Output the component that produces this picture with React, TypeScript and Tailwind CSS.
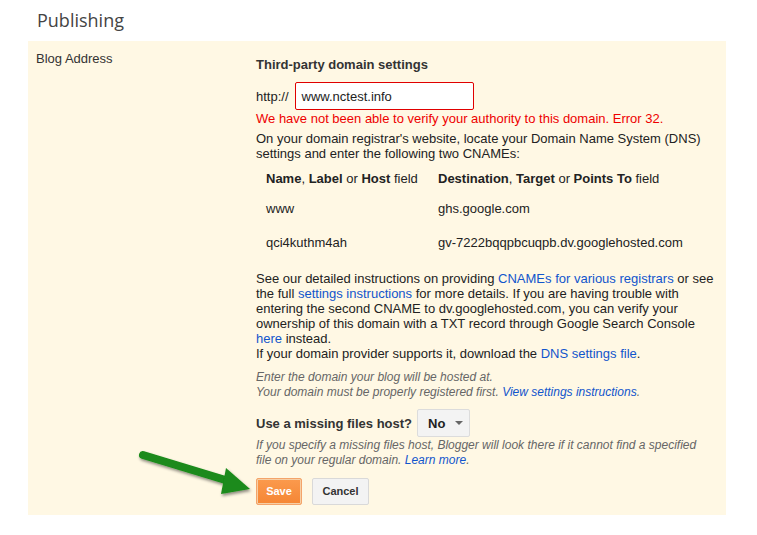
import type { ReactNode } from 'react'

function A({ children }: { children: ReactNode }) {
  return <a className="text-[#1155cc] no-underline">{children}</a>
}

function GreenArrow() {
  return (
    <svg
      className="pointer-events-none absolute left-[134px] top-[444px]"
      width="124"
      height="56"
      viewBox="0 0 124 56"
    >
      <defs>
        <filter id="sh" x="-20%" y="-40%" width="140%" height="180%">
          <feDropShadow dx="1" dy="2" stdDeviation="1.5" floodColor="#000" floodOpacity="0.45" />
        </filter>
      </defs>
      <g filter="url(#sh)">
        <line x1="9" y1="11" x2="98" y2="38" stroke="#1a8a1a" strokeWidth="8" strokeLinecap="round" />
        <polygon points="92,24 116,45 87,50" fill="#1a8a1a" />
      </g>
    </svg>
  )
}

export default function App() {
  return (
    <div className="relative h-[535px] w-[757px] bg-white font-['Liberation_Sans',Arial,sans-serif] text-[13px] leading-[15px] text-[#222]">
      <h1 className="h-[41px] pl-[37px] pt-[7px] font-['Open_Sans',sans-serif] text-[18px] leading-[26px] text-[#444]">
        Publishing
      </h1>

      <div className="ml-[28px] flex h-[474px] w-[698px] bg-[#fff8e4]">
        <div className="w-[228px] pl-[8px] pt-[10px] text-[#333]">Blog Address</div>

        <div className="w-[462px] pt-[16px]">
          <div className="font-bold text-[#333]">Third-party domain settings</div>

          <div className="mt-[10px] flex items-center gap-[6px]">
            <span>http://</span>
            <div className="flex h-[28px] w-[179px] items-center rounded-[2px] border border-[#e00000] bg-white px-[6px] text-[13px]">
              www.nctest.info
            </div>
          </div>

          <div className="mt-[1px] text-[#ee0000]">
            We have not been able to verify your authority to this domain. Error 32.
          </div>

          <div className="mt-[5px]">
            On your domain registrar's website, locate your Domain Name System (DNS) settings and enter the following two CNAMEs:
          </div>

          <div className="mt-[10px] pl-[10px]">
            <div className="flex">
              <div className="w-[172px]">
                <b>Name</b>, <b>Label</b> or <b>Host</b> field
              </div>
              <div>
                <b>Destination</b>, <b>Target</b> or <b>Points To</b> field
              </div>
            </div>
            <div className="mt-[15px] flex">
              <div className="w-[172px]">www</div>
              <div>ghs.google.com</div>
            </div>
            <div className="mt-[19px] flex">
              <div className="w-[172px]">qci4kuthm4ah</div>
              <div>gv-7222bqqpbcuqpb.dv.googlehosted.com</div>
            </div>
          </div>

          <div className="mt-[21px]">
            See our detailed instructions on providing <A>CNAMEs for various registrars</A> or see the full{' '}
            <A>settings instructions</A> for more details. If you are having trouble with entering the second CNAME
            to dv.googlehosted.com, you can verify your ownership of this domain with a TXT record through Google
            Search Console <A>here</A> instead.
            <br />
            If your domain provider supports it, download the <A>DNS settings file</A>.
          </div>

          <div className="mt-[9px] text-[12px] italic leading-[15px] text-[#666]">
            Enter the domain your blog will be hosted at.
            <br />
            Your domain must be properly registered first. <A>View settings instructions</A>.
          </div>

          <div className="mt-[9px] flex items-center gap-[5px]">
            <span className="text-[13px] font-bold text-[#333]">Use a missing files host?</span>
            <div className="flex h-[28px] w-[53px] items-center gap-[10px] rounded-[2px] border border-[#dcdcdc] bg-[#f3f3f3] pl-[10px] text-[13px] font-bold text-[#222]">
              No
              <span className="h-0 w-0 border-x-[4px] border-t-[4px] border-x-transparent border-t-[#666]" />
            </div>
          </div>

          <div className="mt-[1px] w-[450px] text-[12px] italic leading-[15px] text-[#666]">
            If you specify a missing files host, Blogger will look there if it cannot find a specified file on your
            regular domain. <A>Learn more</A>.
          </div>

          <div className="mt-[10px] flex gap-[10px]">
            <button className="h-[27px] w-[46px] rounded-[2px] border border-[#f4a46a] bg-gradient-to-b from-[#fb9a4d] to-[#f58634] text-[11px] font-bold text-white shadow-[inset_0_0_0_1px_#f6cfa6]">
              Save
            </button>
            <button className="h-[27px] w-[57px] rounded-[2px] border border-[#d9d9d9] bg-[#f3f3f3] text-[11px] font-bold text-[#333]">
              Cancel
            </button>
          </div>
        </div>
      </div>

      <GreenArrow />
    </div>
  )
}
